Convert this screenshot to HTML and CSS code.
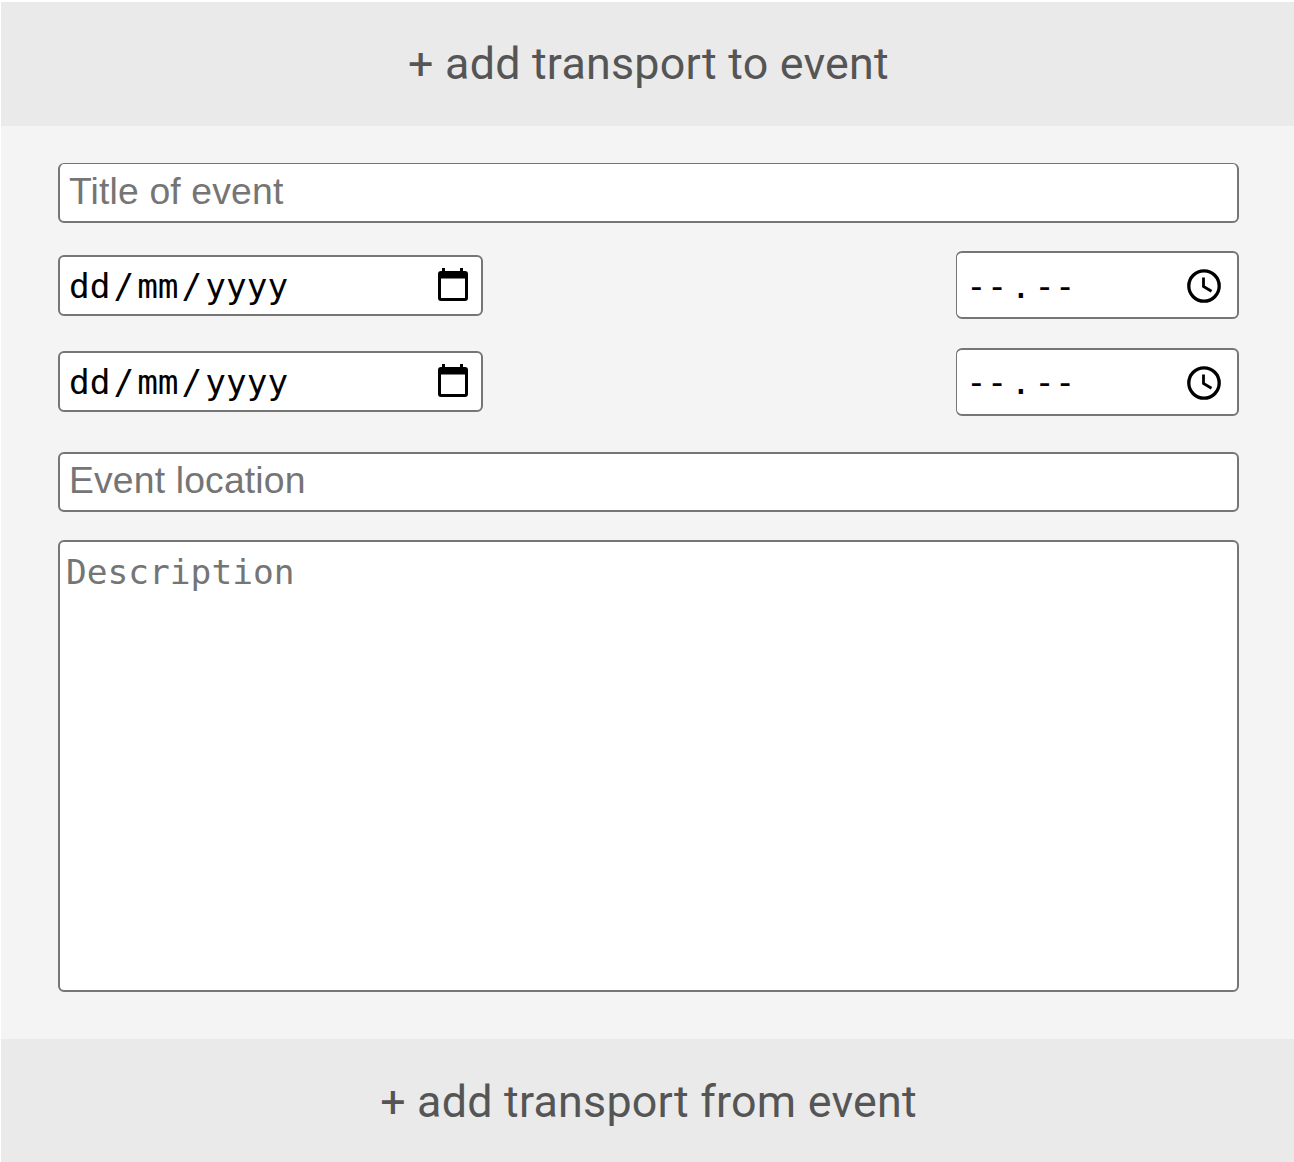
FILE: index.html
```html
<!DOCTYPE html>
<html lang="en">
<head>
<meta charset="utf-8">
<title>Event</title>
<link rel="stylesheet" href="styles.css">
</head>
<body>
<main class="page">
  <button class="transport" type="button">+ add transport to event</button>
  <form class="form">
    <input class="field title" type="text" placeholder="Title of event" aria-label="Title">
    <div class="row">
      <div class="field date">
        <span class="value"><span>dd</span><span class="slash">/</span><span>mm</span><span class="slash">/</span><span>yyyy</span></span>
        <svg class="calendar" viewBox="0 0 32 34"><path fill-rule="evenodd" d="M5 0h3v3h15V0h3v3h2q3 0 3 3v24q0 3-3 3H4q-3 0-3-3V6q0-3 3-3h1zM4 10.500v19.500h24V10.500z"/></svg>
      </div>
      <div class="field time">
        <span class="value"><span>--</span><span class="dot">.</span><span>--</span></span>
        <svg class="clock" viewBox="0 0 34 34"><circle cx="17" cy="17" r="15.2"/><path d="M16.500 8.500v9l8 4.800"/></svg>
      </div>
    </div>
    <div class="row end">
      <div class="field date">
        <span class="value"><span>dd</span><span class="slash">/</span><span>mm</span><span class="slash">/</span><span>yyyy</span></span>
        <svg class="calendar" viewBox="0 0 32 34"><path fill-rule="evenodd" d="M5 0h3v3h15V0h3v3h2q3 0 3 3v24q0 3-3 3H4q-3 0-3-3V6q0-3 3-3h1zM4 10.500v19.500h24V10.500z"/></svg>
      </div>
      <div class="field time">
        <span class="value"><span>--</span><span class="dot">.</span><span>--</span></span>
        <svg class="clock" viewBox="0 0 34 34"><circle cx="17" cy="17" r="15.2"/><path d="M16.500 8.500v9l8 4.800"/></svg>
      </div>
    </div>
    <input class="field location" type="text" placeholder="Event location" aria-label="Location">
    <textarea class="field description" placeholder="Description" aria-label="Description"></textarea>
  </form>
  <button class="transport last" type="button">+ add transport from event</button>
</main>
</body>
</html>
```
FILE: styles.css
```css
* { box-sizing: border-box; }
body { margin: 0; background: #fff; }
.page {
  display: flex;
  flex-direction: column;
  height: 1162px;
  padding: 2px 0 0 1px;
  overflow: hidden;
}
.transport {
  flex: none;
  height: 124px;
  padding: 0 0 0 2px;
  border: 0;
  background: #eaeaea;
  color: #555;
  font: 44.8px/52px Roboto, sans-serif;
  letter-spacing: 0.23px;
  white-space: nowrap;
}
.last { padding-top: 2px; }
.form {
  display: flex;
  flex: none;
  flex-direction: column;
  height: 913px;
  padding: 37px 55px 0 57px;
  background: #f4f4f4;
}
.field {
  display: block;
  flex: none;
  width: 100%;
  margin: 0;
  border: 2px solid #767676;
  border-radius: 6px;
  background: #fff;
  outline: 0;
}
.field::placeholder { color: #757575; opacity: 1; }
.title, .location {
  height: 60px;
  padding: 0 9px 3px;
  font: 37.33px "Liberation Sans", Arial, sans-serif;
  letter-spacing: 0.15px;
}
.title { border-top-width: 1px; margin-bottom: 28px; }
.row {
  display: flex;
  justify-content: space-between;
  align-items: flex-start;
  height: 68px;
  margin-bottom: 29px;
}
.row + .location { margin-top: 7px; }
.date, .time {
  display: flex;
  align-items: center;
  justify-content: space-between;
  color: #000;
  font: 34.4px "DejaVu Sans Mono", monospace;
}
.date { width: 425px; height: 61px; margin-top: 4px; padding: 1px 12px 0 9px; }
.end .date { margin-top: 3px; }
.time { width: 283px; height: 68px; padding: 2px 16px 0 9px; border-left-width: 1px; }
.end .time { padding-top: 1px; }
.value { display: flex; line-height: 40px; }
.end .time .value { margin-bottom: 1px; }
.slash, .dot { margin: 0 3px; }
.calendar { width: 32px; height: 34px; margin-bottom: 2px; }
.clock { width: 34px; height: 34px; fill: none; stroke: #000; stroke-width: 3.3; }
.clock path { stroke-width: 2.8; }
.description {
  height: 452px;
  margin-top: 28px;
  padding: 9px 6px;
  resize: none;
  font: 34.5px/42px "DejaVu Sans Mono", monospace;
}
```
